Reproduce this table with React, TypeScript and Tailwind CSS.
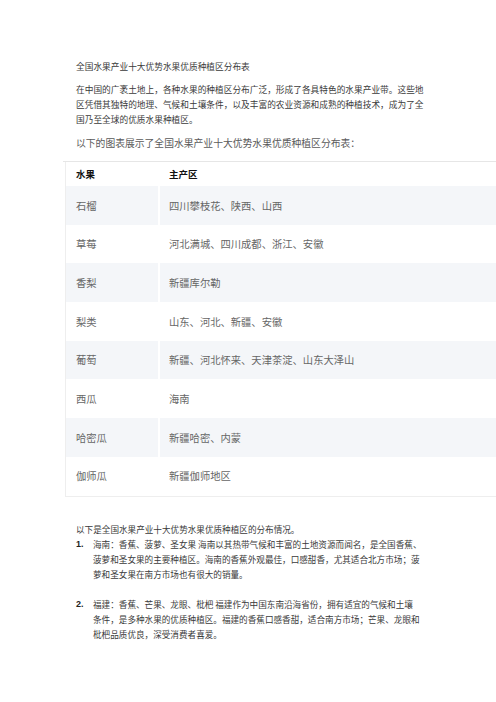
import React from "react";

const rows: [string, string][] = [
  ["石榴", "四川攀枝花、陕西、山西"],
  ["草莓", "河北满城、四川成都、浙江、安徽"],
  ["香梨", "新疆库尔勒"],
  ["梨类", "山东、河北、新疆、安徽"],
  ["葡萄", "新疆、河北怀来、天津茶淀、山东大泽山"],
  ["西瓜", "海南"],
  ["哈密瓜", "新疆哈密、内蒙"],
  ["伽师瓜", "新疆伽师地区"],
];

const items: { n: string; lines: string[] }[] = [
  {
    n: "1.",
    lines: [
      "海南：香蕉、菠萝、圣女果 海南以其热带气候和丰富的土地资源而闻名，是全国香蕉、",
      "菠萝和圣女果的主要种植区。海南的香蕉外观最佳，口感甜香，尤其适合北方市场；菠",
      "萝和圣女果在南方市场也有很大的销量。",
    ],
  },
  {
    n: "2.",
    lines: [
      "福建：香蕉、芒果、龙眼、枇杷 福建作为中国东南沿海省份，拥有适宜的气候和土壤",
      "条件，是多种水果的优质种植区。福建的香蕉口感香甜，适合南方市场；芒果、龙眼和",
      "枇杷品质优良，深受消费者喜爱。",
    ],
  },
];

function Lines({ lines }: { lines: string[] }) {
  return (
    <>
      {lines.map((l) => (
        <div key={l} className="h-[15px] leading-[15px] whitespace-nowrap">
          {l}
        </div>
      ))}
    </>
  );
}

export default function App() {
  return (
    <div className="min-h-[702px] w-[496px] overflow-hidden bg-white font-['Noto_Sans_CJK_SC',sans-serif] text-[#3a3a3a]">
      <div className="pl-[76px] pt-[59px] text-[8.7px]">
        <div className="h-[15px] leading-[15px] whitespace-nowrap">全国水果产业十大优势水果优质种植区分布表</div>
        <div className="mt-[7.5px]">
          <Lines
            lines={[
              "在中国的广袤土地上，各种水果的种植区分布广泛，形成了各具特色的水果产业带。这些地",
              "区凭借其独特的地理、气候和土壤条件，以及丰富的农业资源和成熟的种植技术，成为了全",
              "国乃至全球的优质水果种植区。",
            ]}
          />
        </div>
        <div className="mt-[8.5px] h-[16px] whitespace-nowrap text-[9.8px] leading-[16px] text-[#5a5a5a]">
          以下的图表展示了全国水果产业十大优势水果优质种植区分布表：
        </div>
      </div>

      <div className="ml-[63px] mt-[10px] border-t border-[#e6e6e6]">
        <div className="ml-[2px] border-b border-l border-[#eeeeee]">
          <div className="flex h-[24px] items-center text-[9.5px] font-bold text-[#111]">
            <div className="w-[92px] pl-[10px]">水果</div>
            <div className="pl-[11px]">主产区</div>
          </div>
          {rows.map(([fruit, area], i) => {
            const bg = i % 2 === 0 ? "bg-[#f4f6f9]" : "bg-white";
            return (
              <div key={fruit} className="flex h-[38.7px] text-[10.3px] text-[#666]">
                <div className={`flex w-[92px] items-center pl-[10px] ${bg}`}>{fruit}</div>
                <div className={`ml-[2px] flex flex-1 items-center pl-[9px] ${bg}`}>{area}</div>
              </div>
            );
          })}
        </div>
      </div>

      <div className="pl-[76px] pt-[25px] text-[8.6px]">
        <div className="h-[15px] leading-[15px] whitespace-nowrap">以下是全国水果产业十大优势水果优质种植区的分布情况。</div>
        {items.map((it, i) => (
          <div key={it.n} className={`flex ${i > 0 ? "mt-[15px]" : ""}`}>
            <div className="w-[17px] font-['Liberation_Sans',sans-serif] text-[9px] font-bold leading-[15px] text-[#222]">
              {it.n}
            </div>
            <div>
              <Lines lines={it.lines} />
            </div>
          </div>
        ))}
      </div>
    </div>
  );
}
